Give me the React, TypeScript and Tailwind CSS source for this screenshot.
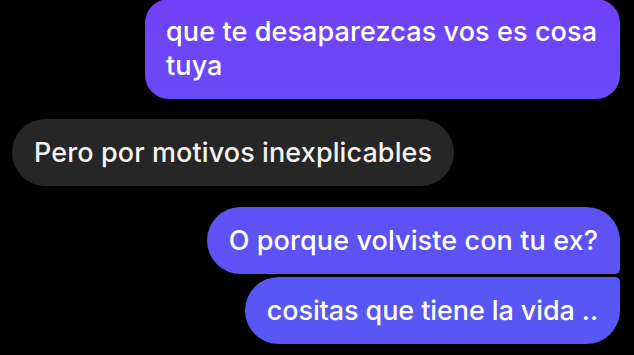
const font = { fontFamily: 'Inter, Roboto, "Noto Sans", sans-serif' };

export default function App() {
  return (
    <div
      className="w-[634px] h-[355px] bg-black overflow-hidden flex flex-col pl-[12px] pr-[14px] text-[27px] leading-[34px] font-medium tracking-[0.1px] text-white"
      style={font}
    >
      {/* Outgoing, two lines */}
      <div className="self-end -mt-[1px] w-[475px] rounded-[24px] bg-gradient-to-b from-[#7141f9] to-[#694af8] pl-[21px] pr-[16px] py-[16px] whitespace-nowrap">
        que te desaparezcas vos es cosa
        <br />
        tuya
      </div>

      {/* Incoming */}
      <div className="self-start mt-[20px] rounded-full bg-[#262626] px-[22px] py-[16.5px] text-[#f2f2f2]">
        Pero por motivos inexplicables
      </div>

      {/* Outgoing group */}
      <div className="self-end mt-[21px] rounded-l-[34px] rounded-tr-[34px] rounded-br-[5px] bg-[#5d52f5] px-[22px] py-[16.5px]">
        O porque volviste con tu ex?
      </div>
      <div className="self-end mt-[3px] rounded-l-[34px] rounded-br-[34px] rounded-tr-[5px] bg-[#5856f4] px-[22px] py-[16.5px] tracking-[-0.1px]">
        cositas que tiene la vida ..
      </div>
    </div>
  );
}
